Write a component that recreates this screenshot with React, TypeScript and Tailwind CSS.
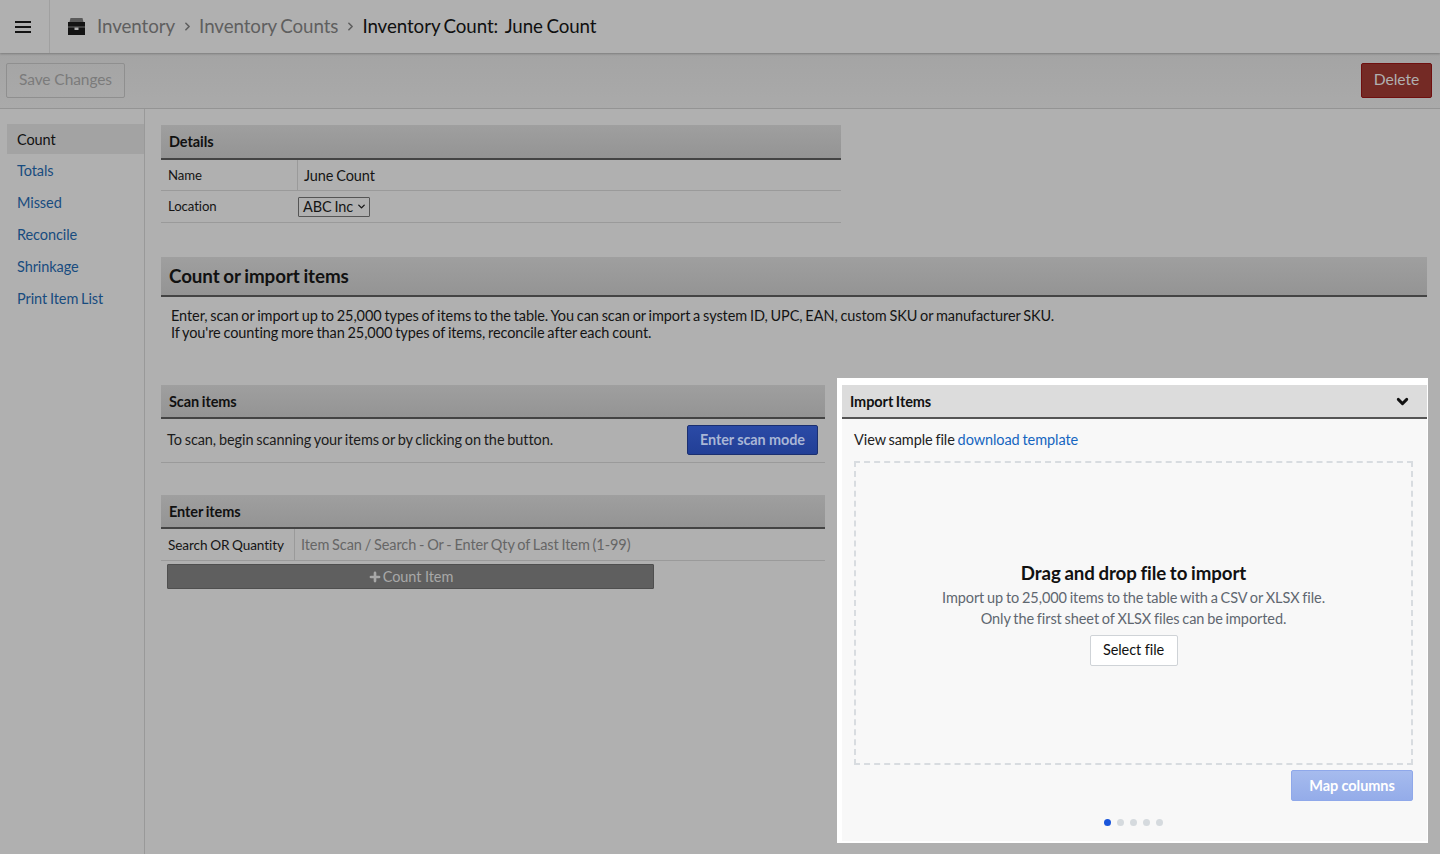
import { ChevronDown, ChevronRight, Plus } from "lucide-react"

const navItems = ["Totals", "Missed", "Reconcile", "Shrinkage", "Print Item List"]

function ArchiveIcon() {
  return (
    <svg width="17" height="17" viewBox="0 0 17 17">
      <path d="M2.5 0h12l1 4h-14z" fill="#5a5a5a" />
      <path d="M0 4h17v13h-17z" fill="#141414" />
      <rect x="0" y="8.5" width="17" height="1" fill="#6a6a6a" />
      <rect x="6.5" y="9.5" width="4" height="2.5" fill="#b0b0b0" />
    </svg>
  )
}

function Topbar() {
  return (
    <div className="relative flex h-[53px] items-stretch bg-[#b0b0b0] shadow-[0_1px_2px_rgba(0,0,0,0.25)]">
      <div className="flex w-[50px] items-center justify-center border-r border-[#a0a0a0] pr-[4px]">
        <div className="flex w-[16px] flex-col gap-[3px]">
          <span className="h-[2px] bg-[#141414]" />
          <span className="h-[2px] bg-[#141414]" />
          <span className="h-[2px] bg-[#141414]" />
        </div>
      </div>
      <div className="flex items-center pl-[18px] text-[18.75px] tracking-[-0.08px] [word-spacing:-1.2px]">
        <ArchiveIcon />
        <span className="ml-[12px] text-[#5f5f5f]">Inventory</span>
        <ChevronRight size={13} strokeWidth={3} className="mx-[5.5px] text-[#5f5f5f]" />
        <span className="text-[#5f5f5f]">Inventory Counts</span>
        <ChevronRight size={13} strokeWidth={3} className="mx-[5.5px] text-[#5f5f5f]" />
        <span className="whitespace-pre text-[#0f0f0f]">Inventory Count:  June Count</span>
      </div>
    </div>
  )
}

function Toolbar() {
  return (
    <div className="flex h-[56px] items-center justify-between border-b border-[#949494] bg-gradient-to-b from-[#a4a4a4] to-[#aaaaaa] pl-[6px] pr-[8px]">
      <button className="h-[35px] w-[119px] rounded-[2px] border border-[#8f8f8f] pb-[2px] text-[15.5px] text-[#7b7b7b]">Save Changes</button>
      <button className="h-[35px] w-[71px] rounded-[2px] border border-[#6f0f0f] bg-[#742a25] pb-[2px] text-[15.7px] text-[#b0b0b0]">Delete</button>
    </div>
  )
}

function Sidebar() {
  return (
    <div className="w-[145px] shrink-0 border-r border-[#999999] pl-[7px] pt-[15px]">
      <div className="mb-[1px] flex h-[30px] items-center bg-[#a3a3a3] pl-[10px] pt-[2px] text-[14.5px] text-[#111111]">Count</div>
      {navItems.map((item) => (
        <div key={item} className="flex h-[32px] items-center pl-[10px] text-[14.5px] text-[#184c7f]">{item}</div>
      ))}
    </div>
  )
}

function SectionHeader({ title }: { title: string }) {
  return (
    <div className="flex h-[34px] items-center border-b-2 border-[#444444] bg-gradient-to-b from-[#9f9f9f] to-[#949494] pl-[8px] pt-[1px] text-[14.5px] font-bold text-[#111111]">
      {title}
    </div>
  )
}

function Details() {
  return (
    <div className="w-[680px]">
      <div className="flex h-[35px] items-center border-b-2 border-[#444444] bg-gradient-to-b from-[#9f9f9f] to-[#949494] pl-[8px] text-[14.5px] font-bold text-[#111111]">
        Details
      </div>
      <div className="flex h-[31px] border-b border-[#9a9a9a] text-[#151515]">
        <div className="flex w-[137px] items-center border-r border-[#9a9a9a] pl-[7px] pt-[1px] text-[13.2px]">Name</div>
        <div className="flex items-center pl-[6px] pt-[1px] text-[14.5px]">June Count</div>
      </div>
      <div className="flex h-[32px] border-b border-[#9a9a9a] text-[#151515]">
        <div className="flex w-[137px] items-center pl-[7px] pt-[1px] text-[13.2px]">Location</div>
        <div className="flex items-center">
          <div className="flex h-[20px] w-[72px] items-center gap-[3px] whitespace-nowrap rounded-[1px] border border-[#555555] pl-[4px] text-[14.5px]">
            ABC Inc
            <ChevronDown size={11} strokeWidth={3} />
          </div>
        </div>
      </div>
    </div>
  )
}

function ImportPanel() {
  return (
    <div className="-ml-[5px] -mt-[7px] shrink-0 self-start border-b-[2px] border-l-[5px] border-r border-t-[7px] border-white">
      <div className="h-[456px] w-[585px] bg-[#f8f8f8]">
        <div className="flex h-[34px] items-center justify-between border-b-2 border-[#555555] bg-[#dcdcdc] pl-[8px] pr-[16px] pt-[1px] text-[14.5px] font-bold text-[#111111]">
          Import Items
          <ChevronDown size={17} strokeWidth={4} />
        </div>
        <div className="pl-[12px] pr-[14px] pt-[12px]">
          <p className="text-[14.5px] leading-[18px] text-[#222222]">
            View sample file <span className="text-[#1565c0]">download template</span>
          </p>
          <div className="mt-[12px] flex h-[304px] flex-col items-center justify-center border-2 border-dashed border-[#d8dce0] pb-[1px]">
            <p className="text-[18.7px] font-bold leading-[26px] text-[#111111]">Drag and drop file to import</p>
            <p className="mt-[1px] text-[14.5px] leading-[21px] text-[#5f6770]">Import up to 25,000 items to the table with a CSV or XLSX file.</p>
            <p className="text-[14.5px] leading-[21px] text-[#5f6770]">Only the first sheet of XLSX files can be imported.</p>
            <button className="mt-[6px] h-[31px] w-[88px] rounded-[2px] border border-[#cfd3d7] bg-white text-[14.5px] text-[#111111]">Select file</button>
          </div>
          <div className="mt-[5px] flex justify-end">
            <button className="h-[31px] w-[122px] rounded-[2px] border border-[#8fa8ea] bg-gradient-to-b from-[#a6bbee] to-[#94ace9] text-[14.5px] font-bold text-white">Map columns</button>
          </div>
          <div className="mt-[18px] flex justify-center gap-[6px]">
            <span className="size-[7px] rounded-full bg-[#1a56db]" />
            <span className="size-[7px] rounded-full bg-[#d5dade]" />
            <span className="size-[7px] rounded-full bg-[#d5dade]" />
            <span className="size-[7px] rounded-full bg-[#d5dade]" />
            <span className="size-[7px] rounded-full bg-[#d5dade]" />
          </div>
        </div>
      </div>
    </div>
  )
}

function LeftColumn() {
  return (
    <div className="w-[664px] shrink-0">
      <SectionHeader title="Scan items" />
      <div className="flex h-[44px] items-center justify-between border-b border-[#9a9a9a] pb-[2px] pl-[6px] pr-[7px] text-[14.5px] text-[#1c1c1c]">
        To scan, begin scanning your items or by clicking on the button.
        <button className="h-[30px] w-[131px] rounded-[2px] border border-[#1b2f70] bg-gradient-to-b from-[#2b4aa6] to-[#223f96] text-[14.4px] font-bold text-[#a9b6d6]">Enter scan mode</button>
      </div>
      <div className="mt-[32px]">
        <SectionHeader title="Enter items" />
        <div className="flex h-[32px] border-b border-[#9a9a9a]">
          <div className="flex w-[134px] items-center border-r border-[#9a9a9a] pl-[7px] pt-[1px] text-[13.6px] text-[#151515]">Search OR Quantity</div>
          <div className="flex items-center pl-[6px] text-[14.5px] text-[#666666]">Item Scan / Search - Or - Enter Qty of Last Item (1-99)</div>
        </div>
        <button className="ml-[6px] mt-[3px] flex h-[25px] w-[487px] items-center justify-center gap-[1px] rounded-[1px] border border-[#4f4f4f] bg-[#5f5f5f] text-[14.5px] text-[#a8a8a8]">
          <Plus size={14} strokeWidth={4.5} />Count Item
        </button>
      </div>
    </div>
  )
}

export default function App() {
  return (
    <div className="flex h-[854px] flex-col overflow-hidden bg-[#b0b0b0] font-['Lato',sans-serif] tracking-[-0.08px] [word-spacing:-0.8px]">
      <Topbar />
      <Toolbar />
      <div className="flex flex-1">
        <Sidebar />
        <div className="flex-1 pl-[16px] pr-[13px] pt-[16px]">
          <Details />
          <div className="mr-[1px] mt-[34px] flex h-[40px] items-center border-b-2 border-[#444444] bg-gradient-to-b from-[#9f9f9f] to-[#949494] pl-[8px] pt-[1px] text-[18.8px] font-bold text-[#111111]">
            Count or import items
          </div>
          <div className="pl-[10px] pt-[10px] text-[14.5px] leading-[17px] text-[#141414]">
            <p>Enter, scan or import up to 25,000 types of items to the table. You can scan or import a system ID, UPC, EAN, custom SKU or manufacturer SKU.</p>
            <p>If you're counting more than 25,000 types of items, reconcile after each count.</p>
          </div>
          <div className="mt-[44px] flex gap-[17px]">
            <LeftColumn />
            <ImportPanel />
          </div>
        </div>
      </div>
    </div>
  )
}
